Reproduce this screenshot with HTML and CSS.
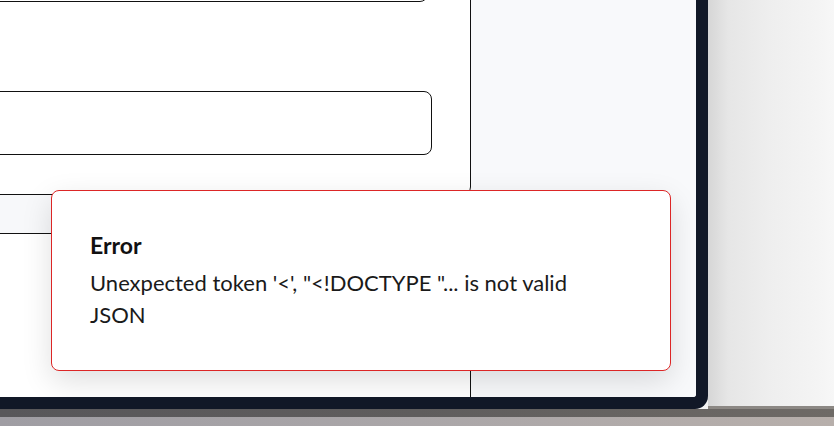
FILE: index.html
```html
<!DOCTYPE html>
<html lang="en">
<head>
<meta charset="utf-8">
<title>Error</title>
<link rel="stylesheet" href="styles.css">
</head>
<body>
<div class="scene">
  <div class="top">
    <div class="bezel">
      <div class="screen">
        <div class="left">
          <div class="card">
            <div class="field f1"></div>
            <div class="field f2"></div>
          </div>
          <div class="table">
            <div class="thead"></div>
          </div>
        </div>
        <div class="right"></div>
        <div class="toast" role="alert">
          <div class="toast-title">Error</div>
          <div class="toast-msg">Unexpected token '&lt;', "&lt;!DOCTYPE "... is not valid JSON</div>
        </div>
      </div>
    </div>
    <div class="desk"></div>
  </div>
  <div class="base">
    <div class="base-edge"></div>
    <div class="base-front"></div>
  </div>
</div>
</body>
</html>
```

FILE: styles.css
```css
* { box-sizing: border-box; }
html, body { margin: 0; padding: 0; }
body {
  width: 834px;
  height: 426px;
  overflow: hidden;
  font-family: Lato, "Noto Sans", sans-serif;
  background: #f4f4f4;
}
.scene { display: flex; flex-direction: column; width: 834px; height: 426px; }
.top { display: flex; height: 409px; }
.bezel {
  width: 708px;
  height: 409px;
  background: #111827;
  border-bottom-right-radius: 13px;
  padding: 0 12px 12px 0;
  position: relative;
  z-index: 2;
}
.screen {
  width: 696px;
  height: 397px;
  background: #ffffff;
  border-bottom-right-radius: 3px;
  overflow: hidden;
  position: relative;
  display: flex;
}
.left { width: 471px; display: flex; flex-direction: column; background: #fff; }
.right { flex: 1; background: #f8f9fb; }
.card {
  margin: -100px 0 0 -20px;
  border: 1px solid #111;
  border-radius: 8px;
  padding: 41px 38px 39px 0;
  background: #fff;
}
.field { border: 1px solid #111; border-radius: 8px; background: #fff; }
.f1 { height: 60px; margin-right: 4px; }
.f2 { height: 64px; margin-top: 89px; }
.table {
  flex: 1;
  margin-left: -20px;
  border-right: 1px solid #111;
  background: #fff;
}
.thead { height: 39px; background: #f7f8fa; border-bottom: 1px solid #111; }
.toast {
  position: absolute;
  left: 51px;
  top: 190px;
  width: 620px;
  height: 181px;
  background: #fff;
  border: 1px solid #dc2626;
  border-radius: 8px;
  box-shadow: 0 10px 30px rgba(0, 0, 0, 0.13);
  padding: 40px 38px 0 38px;
  color: #111;
}
.toast-title { font-weight: 700; font-size: 23px; line-height: 28px; }
.toast-msg { font-size: 22px; line-height: 32px; margin-top: 8px; max-width: 520px; color: #1a1a1a; }
.desk {
  flex: 1;
  background:
    linear-gradient(to bottom, transparent 406px, #8c8884 406px),
    linear-gradient(to right, #d6d6d6 0, #e6e6e6 20px, #eeeeee 60px, #f4f4f4 110px, #f7f7f7 100%);
}
.base { height: 17px; display: flex; flex-direction: column; }
.base-edge { height: 8px; background: linear-gradient(to right, #58575a 0, #5f5d5d 50%, #6e6a66 100%); }
.base-front { flex: 1; background: linear-gradient(to right, #9f9da3 0, #aaa6a8 50%, #b7afab 100%); }
```
